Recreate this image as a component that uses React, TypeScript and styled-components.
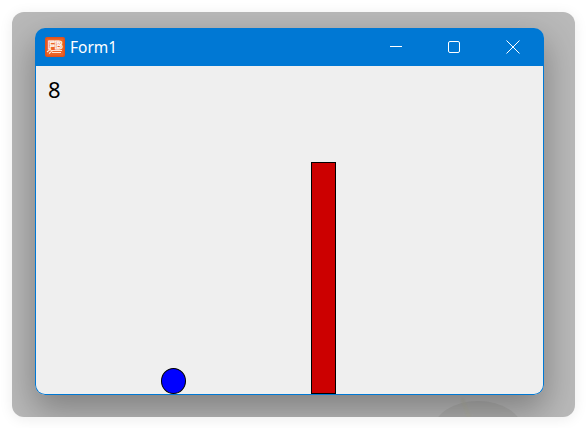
import styled, { createGlobalStyle } from "styled-components";

const Page = createGlobalStyle`
  html, body {
    margin: 0;
    padding: 0;
    background: #ffffff;
    font-family: "Noto Sans", "Open Sans", sans-serif;
  }
`;

// style
const Stage = styled.div`
  width: 586px;
  height: 428px;
  padding: 12px 11px 11px 12px;
  box-sizing: border-box;
  overflow: hidden;
`;
const Backdrop = styled.div`
  position: relative;
  width: 563px;
  height: 405px;
  padding: 16px 31px 22px 23px;
  box-sizing: border-box;
  overflow: hidden;
  border-radius: 12px;
  background: #b9b9b9;
  box-shadow: 0 2px 14px rgba(0, 0, 0, 0.08);
`;
const Smudge = styled.div`
  position: absolute;
  z-index: 1;
  left: 421px;
  top: 389px;
  width: 90px;
  height: 60px;
  border-radius: 50%;
  background: rgba(130, 130, 125, 0.2);
`;
const Streak = styled.div`
  position: absolute;
  z-index: 1;
  left: 452px;
  top: 386px;
  width: 4px;
  height: 22px;
  transform: rotate(-20deg);
  background: rgba(175, 175, 155, 0.4);
  filter: blur(1px);
`;
const Window = styled.div`
  position: relative;
  z-index: 2;
  display: flex;
  flex-direction: column;
  width: 509px;
  height: 367px;
  border-radius: 10px;
  box-shadow: 0 14px 34px 2px rgba(0, 0, 0, 0.3);
  overflow: hidden;
`;
const TitleBar = styled.div`
  display: flex;
  align-items: center;
  flex: 0 0 38px;
  padding-left: 10px;
  background: #0078d4;
  color: #ffffff;
`;
const AppIcon = styled.svg`
  width: 20px;
  height: 20px;
  flex: none;
`;
const IconLetters = styled.text`
  font-family: "Liberation Sans", sans-serif;
  font-size: 11px;
  font-weight: 700;
  fill: #e8591c;
  stroke: #ffffff;
  stroke-width: 0.9px;
`;
const Title = styled.span`
  margin-left: 5px;
  font-size: 15.5px;
  line-height: 20px;
`;
const Controls = styled.div`
  display: flex;
  margin-left: auto;
  padding-right: 2px;
`;
const ControlButton = styled.div<{ $width: number }>`
  display: flex;
  align-items: center;
  width: ${(props) => props.$width}px;
  height: 38px;
  padding-left: 22px;
  box-sizing: border-box;
`;
const ControlIcon = styled.svg`
  width: 14px;
  height: 14px;
  fill: none;
  stroke: #ffffff;
  stroke-width: 1;
`;
const Client = styled.div`
  position: relative;
  flex: 1;
  background: #efefef;
  border: 1px solid #0078d4;
  border-top: 0;
  border-radius: 0 0 10px 10px;
`;
const Score = styled.div`
  padding: 8px 0 0 12px;
  font-size: 22px;
  line-height: 30px;
  color: #000000;
`;
const Ball = styled.div`
  position: absolute;
  left: 125px;
  top: 302px;
  width: 25px;
  height: 26px;
  box-sizing: border-box;
  border: 1px solid #000000;
  border-radius: 50%;
  background: #0000ff;
`;
const Pillar = styled.div`
  position: absolute;
  left: 275px;
  top: 96px;
  width: 25px;
  height: 232px;
  box-sizing: border-box;
  border: 1px solid #000000;
  background: #cc0000;
`;

const App = () => {
  return (
    <>
      <Page />
      <Stage>
        <Backdrop>
          <Smudge />
          <Streak />
          <Window>
            <TitleBar>
              <AppIcon viewBox="0 0 20 20">
                <rect width="20" height="20" rx="2" fill="#e2521a" />
                <rect x="1.500" y="1.500" width="17" height="17" rx="1" fill="#ec6426" />
                <IconLetters x="3" y="11.500">
                  FB
                </IconLetters>
                <path
                  d="M2 15l3-2.500 2 1.500-3 2.500M7 13.500h10M7 15.500h9"
                  fill="none"
                  stroke="#ffe6d6"
                  strokeWidth="1.100"
                />
              </AppIcon>
              <Title>Form1</Title>
              <Controls>
                <ControlButton $width={58}>
                  <ControlIcon viewBox="0 0 14 14">
                    <path d="M1 6.500h12" />
                  </ControlIcon>
                </ControlButton>
                <ControlButton $width={59}>
                  <ControlIcon viewBox="0 0 14 14">
                    <rect x="1.500" y="1.500" width="11" height="11" rx="1.500" />
                  </ControlIcon>
                </ControlButton>
                <ControlButton $width={58}>
                  <ControlIcon viewBox="0 0 14 14">
                    <path d="M0.500 0.500l13 13M13.500 0.500l-13 13" />
                  </ControlIcon>
                </ControlButton>
              </Controls>
            </TitleBar>
            <Client>
              <Score>8</Score>
              <Ball />
              <Pillar />
            </Client>
          </Window>
        </Backdrop>
      </Stage>
    </>
  );
};

export default App;
